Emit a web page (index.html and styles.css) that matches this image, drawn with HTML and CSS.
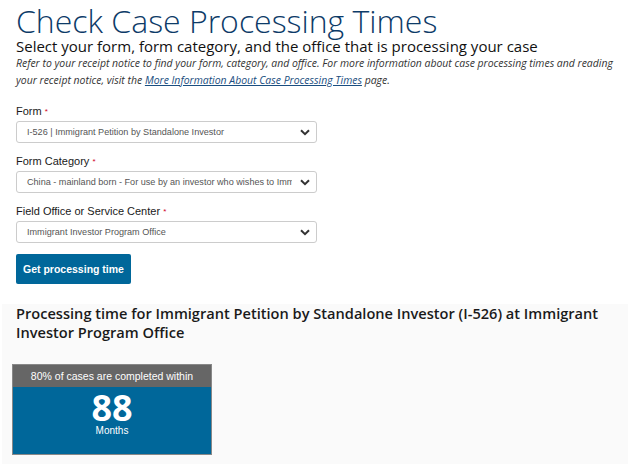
FILE: index.html
```html
<!DOCTYPE html>
<html lang="en">
<head>
<meta charset="utf-8">
<title>Check Case Processing Times</title>
<link rel="stylesheet" href="styles.css">
</head>
<body>
<main class="page">
  <h1 class="title">Check Case Processing Times</h1>
  <p class="subtitle">Select your form, form category, and the office that is processing your case</p>
  <p class="note">Refer to your receipt notice to find your form, category, and office. For more information about case processing times and reading your receipt notice, visit the <a href="#">More Information About Case Processing Times</a> page.</p>

  <form class="form">
    <div class="field">
      <label class="label">Form <span class="req">*</span></label>
      <div class="select"><span class="select-text">I-526 | Immigrant Petition by Standalone Investor</span>
        <svg class="chev" viewBox="0 0 10 7" width="10" height="7"><path d="M1 1.2 L5 5.2 L9 1.2" fill="none" stroke="#333" stroke-width="2"/></svg>
      </div>
    </div>
    <div class="field">
      <label class="label">Form Category <span class="req">*</span></label>
      <div class="select"><span class="select-text">China - mainland born - For use by an investor who wishes to Immigrate</span>
        <svg class="chev" viewBox="0 0 10 7" width="10" height="7"><path d="M1 1.2 L5 5.2 L9 1.2" fill="none" stroke="#333" stroke-width="2"/></svg>
      </div>
    </div>
    <div class="field">
      <label class="label">Field Office or Service Center <span class="req">*</span></label>
      <div class="select"><span class="select-text">Immigrant Investor Program Office</span>
        <svg class="chev" viewBox="0 0 10 7" width="10" height="7"><path d="M1 1.2 L5 5.2 L9 1.2" fill="none" stroke="#333" stroke-width="2"/></svg>
      </div>
    </div>
    <button type="button" class="btn">Get processing time</button>
  </form>

  <section class="result">
    <h2 class="result-title">Processing time for Immigrant Petition by Standalone Investor (I-526) at Immigrant Investor Program Office</h2>
    <div class="card">
      <div class="card-head">80% of cases are completed within</div>
      <div class="card-body">
        <div class="num">88</div>
        <div class="unit">Months</div>
      </div>
    </div>
  </section>
</main>
</body>
</html>
```

FILE: styles.css
```css
html, body { margin: 0; padding: 0; background: #fff; }
body { font-family: "Liberation Sans", Arial, sans-serif; color: #222; }
.title {
  margin: 0;
  padding: 4px 0 0 16px;
  font-family: "Open Sans", sans-serif;
  font-weight: 300;
  font-size: 32px;
  line-height: 34px;
  color: #0d3b68;
}
.subtitle {
  margin: 0 0 0 16px;
  font-family: "Open Sans", sans-serif;
  font-size: 15px;
  line-height: 17px;
  color: #111;
}
.note {
  margin: 0 0 0 16px;
  width: 608px;
  font-family: "Open Sans", sans-serif;
  font-style: italic;
  font-size: 10.45px;
  line-height: 16.5px;
  color: #333;
}
.note a { color: #1a4e80; text-decoration: underline; }
.form { margin: 17px 0 0 16px; display: flex; flex-direction: column; align-items: flex-start; }
.field { display: flex; flex-direction: column; margin-bottom: 12px; }
.label { font-size: 11px; line-height: 13px; color: #1a1a1a; margin-bottom: 3px; }
.req { color: #d0021b; font-size: 8px; vertical-align: top; }
.select {
  box-sizing: border-box;
  width: 301px; height: 22px;
  border: 1px solid #ccc; border-radius: 3px;
  display: flex; align-items: center; justify-content: space-between;
  padding: 0 6px 0 10px;
  background: #fff;
}
.select-text { font-size: 9.1px; color: #555; white-space: nowrap; overflow: hidden; width: 265px; }
.chev { flex: none; }
.btn {
  margin-top: -1px;
  width: 115px; height: 30px;
  border: 0; border-radius: 2px;
  background: #00679a; color: #fff;
  font-family: "Liberation Sans", Arial, sans-serif;
  font-weight: bold; font-size: 10.5px;
  padding: 0;
}
.result {
  margin: 20px 11px 0 2px;
  background: #fafafa;
  padding: 0;
  height: 164px;
  overflow: hidden;
}
.result-title {
  margin: 0; padding: 0 14px;
  font-family: "Open Sans", sans-serif;
  font-weight: 600; font-size: 14.6px; line-height: 19px;
  color: #1a1a1a;
}
.card {
  margin: 22px 0 0 10px;
  width: 200px;
  border: 1px solid #888;
  box-sizing: border-box;
}
.card-head {
  background: #666; color: #fff;
  height: 22px; line-height: 22px;
  text-align: center; font-size: 10.5px;
}
.card-body {
  background: #00679a; color: #fff;
  height: 67px; text-align: center;
}
.num { font-family: "Open Sans", sans-serif; font-weight: 700; font-size: 36px; line-height: 35px; padding-top: 3px; }
.unit { font-size: 10px; line-height: 12px; }
```
